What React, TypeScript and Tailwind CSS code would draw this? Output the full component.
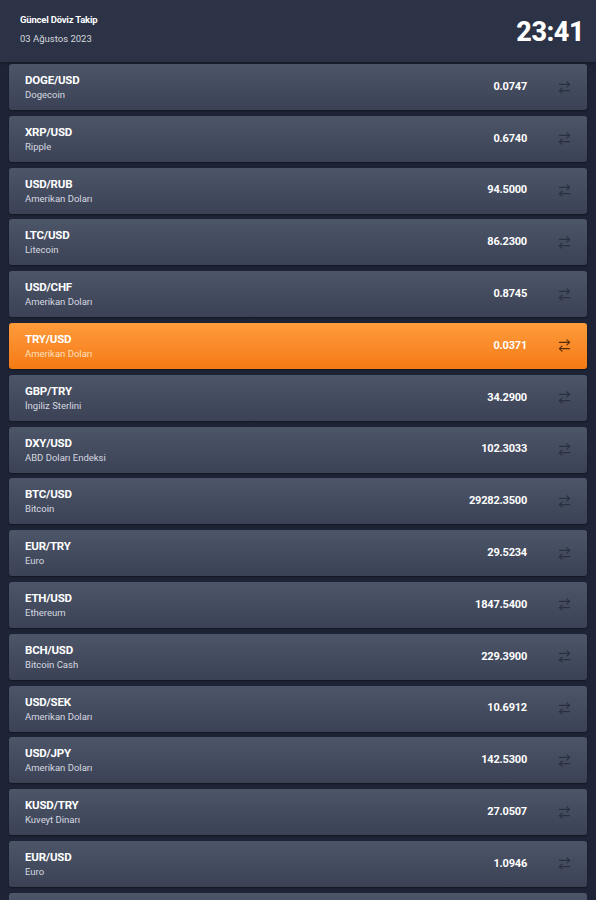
import React from 'react'
import { ArrowRightLeft } from 'lucide-react'

const rates = [
  { pair: 'DOGE/USD', name: 'Dogecoin', value: '0.0747' },
  { pair: 'XRP/USD', name: 'Ripple', value: '0.6740' },
  { pair: 'USD/RUB', name: 'Amerikan Doları', value: '94.5000' },
  { pair: 'LTC/USD', name: 'Litecoin', value: '86.2300' },
  { pair: 'USD/CHF', name: 'Amerikan Doları', value: '0.8745' },
  { pair: 'TRY/USD', name: 'Amerikan Doları', value: '0.0371', active: true },
  { pair: 'GBP/TRY', name: 'İngiliz Sterlini', value: '34.2900' },
  { pair: 'DXY/USD', name: 'ABD Doları Endeksi', value: '102.3033' },
  { pair: 'BTC/USD', name: 'Bitcoin', value: '29282.3500' },
  { pair: 'EUR/TRY', name: 'Euro', value: '29.5234' },
  { pair: 'ETH/USD', name: 'Ethereum', value: '1847.5400' },
  { pair: 'BCH/USD', name: 'Bitcoin Cash', value: '229.3900' },
  { pair: 'USD/SEK', name: 'Amerikan Doları', value: '10.6912' },
  { pair: 'USD/JPY', name: 'Amerikan Doları', value: '142.5300' },
  { pair: 'KUSD/TRY', name: 'Kuveyt Dinarı', value: '27.0507' },
  { pair: 'EUR/USD', name: 'Euro', value: '1.0946' },
]

export default function App() {
  return (
    <div className="h-[900px] w-[596px] overflow-hidden bg-[#1e2436] font-['Roboto',sans-serif] text-white">
      {/* Header */}
      <div className="flex h-[62px] items-center justify-between bg-[#2c3346] pl-[20px] pr-[12px] shadow-[0_1px_3px_rgba(0,0,0,0.4)]">
        <div className="-mt-[4px] flex flex-col">
          <span className="text-[9.5px] font-bold leading-[12px] tracking-[-0.2px]">Güncel Döviz Takip</span>
          <span className="mt-[7px] text-[9.5px] leading-[12px] text-[#d4d7de]">03 Ağustos 2023</span>
        </div>
        <span className="mt-[2px] text-[27px] font-extrabold leading-none tracking-[-0.5px]">23:41</span>
      </div>

      {/* List */}
      <div className="flex flex-col gap-[5.8px] pl-[9px] pr-[9px] pt-[2px]">
        {rates.map((r) => (
          <div
            key={r.pair}
            className={
              r.active
                ? 'flex h-[46px] shrink-0 items-center rounded-[3px] bg-gradient-to-b from-[#ff9b3a] to-[#f47a12] pl-[16px] pr-[15px] shadow-[0_1px_2px_rgba(0,0,0,0.4)]'
                : 'flex h-[46px] shrink-0 items-center rounded-[3px] bg-gradient-to-b from-[#4d5568] to-[#3b4255] pl-[16px] pr-[15px] shadow-[0_1px_2px_rgba(0,0,0,0.4)]'
            }
          >
            <div className="flex flex-1 flex-col">
              <span className="text-[11.5px] font-bold leading-[14px] tracking-[-0.2px]">{r.pair}</span>
              <span
                className={
                  r.active
                    ? 'mt-[1px] text-[9.5px] leading-[13px] text-[#ffe0bd]'
                    : 'mt-[1px] text-[9.5px] leading-[13px] text-[#d6d9e0]'
                }
              >
                {r.name}
              </span>
            </div>
            <span className="mr-[30px] text-[11px] font-bold tracking-[-0.2px]">{r.value}</span>
            <ArrowRightLeft
              className={r.active ? 'h-[15px] w-[15px] text-[#5a2e08]' : 'h-[15px] w-[15px] text-[#2a3040]'}
              strokeWidth={2}
            />
          </div>
        ))}
        {/* next row, only its top edge is in view */}
        <div className="h-[46px] shrink-0 rounded-[3px] bg-gradient-to-b from-[#4d5568] to-[#3b4255]" />
      </div>
    </div>
  )
}
